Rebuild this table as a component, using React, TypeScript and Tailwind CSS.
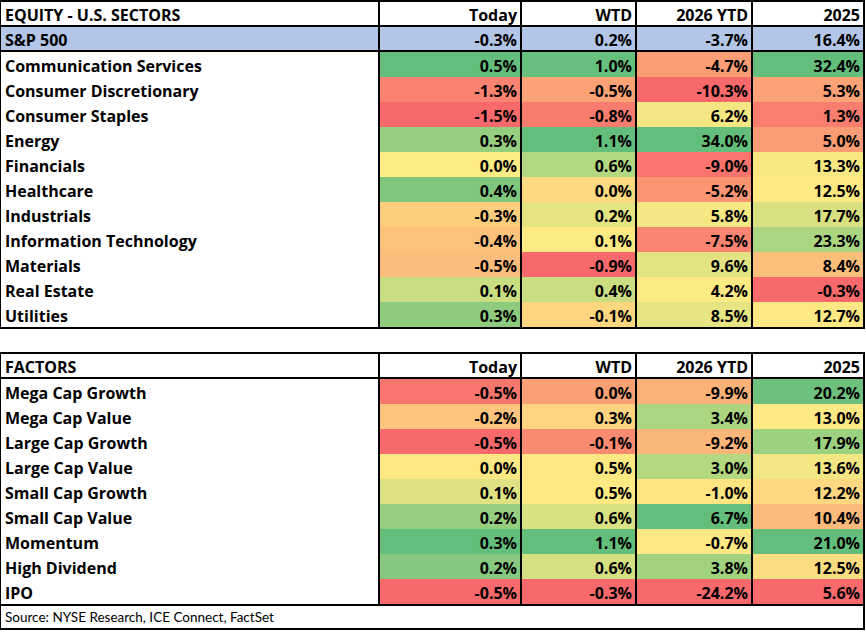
type Row = { label: string; cells: [string, string][] };

const sectors: Row[] = [
  { label: "Communication Services", cells: [["0.5%", "#63BE7B"], ["1.0%", "#66BF7C"], ["-4.7%", "#FA9D75"], ["32.4%", "#63BE7B"]] },
  { label: "Consumer Discretionary", cells: [["-1.3%", "#F98370"], ["-0.5%", "#FBA276"], ["-10.3%", "#F8696B"], ["5.3%", "#FBA276"]] },
  { label: "Consumer Staples", cells: [["-1.5%", "#F8696B"], ["-0.8%", "#F97D6F"], ["6.2%", "#F4E783"], ["1.3%", "#F97E6F"]] },
  { label: "Energy", cells: [["0.3%", "#96CE7F"], ["1.1%", "#63BE7B"], ["34.0%", "#63BE7B"], ["5.0%", "#FA9C74"]] },
  { label: "Financials", cells: [["0.0%", "#FFEB84"], ["0.6%", "#B2D880"], ["-9.0%", "#F8746D"], ["13.3%", "#F7E883"]] },
  { label: "Healthcare", cells: [["0.4%", "#7FC77D"], ["0.0%", "#FED980"], ["-5.2%", "#FA9473"], ["12.5%", "#FEE983"]] },
  { label: "Industrials", cells: [["-0.3%", "#FDCD7E"], ["0.2%", "#E5E483"], ["5.8%", "#F5E884"], ["17.7%", "#D9E082"]] },
  { label: "Information Technology", cells: [["-0.4%", "#FCC27C"], ["0.1%", "#FEEA83"], ["-7.5%", "#F98570"], ["23.3%", "#ABD580"]] },
  { label: "Materials", cells: [["-0.5%", "#FCBC7B"], ["-0.9%", "#F8696B"], ["9.6%", "#E2E383"], ["8.4%", "#FCBF7B"]] },
  { label: "Real Estate", cells: [["0.1%", "#C9DD81"], ["0.4%", "#CBDD81"], ["4.2%", "#FEEA83"], ["-0.3%", "#F8696B"]] },
  { label: "Utilities", cells: [["0.3%", "#8ECB7E"], ["-0.1%", "#FED680"], ["8.5%", "#E7E583"], ["12.7%", "#FEE883"]] },
];

const factors: Row[] = [
  { label: "Mega Cap Growth", cells: [["-0.5%", "#F8766D"], ["0.0%", "#F9A074"], ["-9.9%", "#FBB279"], ["20.2%", "#6DC17C"]] },
  { label: "Mega Cap Value", cells: [["-0.2%", "#FCC47C"], ["0.3%", "#FED480"], ["3.4%", "#ABD580"], ["13.0%", "#FFE984"]] },
  { label: "Large Cap Growth", cells: [["-0.5%", "#F8696B"], ["-0.1%", "#F98A72"], ["-9.2%", "#FBB679"], ["17.9%", "#9CD17F"]] },
  { label: "Large Cap Value", cells: [["0.0%", "#FEE883"], ["0.5%", "#FEE883"], ["3.0%", "#B3D880"], ["13.6%", "#F2E783"]] },
  { label: "Small Cap Growth", cells: [["0.1%", "#DEE283"], ["0.5%", "#FEE983"], ["-1.0%", "#FEE582"], ["12.2%", "#FED880"]] },
  { label: "Small Cap Value", cells: [["0.2%", "#95CE7F"], ["0.6%", "#DAE182"], ["6.7%", "#63BE7B"], ["10.4%", "#FBBA7A"]] },
  { label: "Momentum", cells: [["0.3%", "#63BE7B"], ["1.1%", "#63BE7B"], ["-0.7%", "#FEE883"], ["21.0%", "#63BE7B"]] },
  { label: "High Dividend", cells: [["0.2%", "#86C97E"], ["0.6%", "#D6DF82"], ["3.8%", "#A0D27F"], ["12.5%", "#FEDD81"]] },
  { label: "IPO", cells: [["-0.5%", "#F8696B"], ["-0.3%", "#F8696B"], ["-24.2%", "#F8696B"], ["5.6%", "#F8696B"]] },
];

const heads = ["Today", "WTD", "2026 YTD", "2025"];

// label | Today | WTD | YTD | 2025 — value cells carry their own left rule
const grid = "grid grid-cols-[377px_142px_115px_116px_112px]";

function HeaderRow({ title }: { title: string }) {
  return (
    <div className={`${grid} h-[25px] border-b-2 border-black`}>
      <div className="flex items-center pl-[4px] pt-[2px]">{title}</div>
      {heads.map((h) => (
        <div key={h} className="flex items-center justify-end border-l-2 border-black pr-[3px] pt-[2px]">
          {h}
        </div>
      ))}
    </div>
  );
}

function DataRow({ row, bg, className = "h-[25px]" }: { row: Row; bg?: string; className?: string }) {
  return (
    <div className={`${grid} ${className}`} style={bg ? { backgroundColor: bg } : undefined}>
      <div className="flex items-center pl-[4px] pt-[2px]">{row.label}</div>
      {row.cells.map(([v, c], i) => (
        <div
          key={i}
          className="flex items-center justify-end border-l-2 border-black pr-[3px] pt-[2px]"
          style={{ backgroundColor: c }}
        >
          {v}
        </div>
      ))}
    </div>
  );
}

export default function App() {
  return (
    <div className="h-[633px] w-[866px] bg-white font-['Open_Sans',sans-serif] text-[16px] leading-none font-bold text-black">
      {/* ── Equity sectors ── */}
      <div className="w-[865px] border-y-2 border-l border-r-2 border-black">
        <HeaderRow title="EQUITY - U.S. SECTORS" />
        <DataRow
          row={{ label: "S&P 500", cells: [["-0.3%", "#B4C6E7"], ["0.2%", "#B4C6E7"], ["-3.7%", "#B4C6E7"], ["16.4%", "#B4C6E7"]] }}
          bg="#B4C6E7"
          className="h-[25px] border-b-2 border-black"
        />
        {sectors.map((r) => (
          <DataRow key={r.label} row={r} />
        ))}
      </div>

      {/* ── Factors ── */}
      <div className="mt-[23px] w-[865px] border-y-2 border-l border-r-2 border-black">
        <HeaderRow title="FACTORS" />
        {factors.map((r) => (
          <DataRow key={r.label} row={r} />
        ))}
      </div>
      <div className="flex h-[24px] w-[865px] items-center border-b-2 border-l border-r-2 border-black pl-[4px] pt-[1px] font-['Lato',sans-serif] text-[13.5px] font-normal">
        Source: NYSE Research, ICE Connect, FactSet
      </div>
    </div>
  );
}
